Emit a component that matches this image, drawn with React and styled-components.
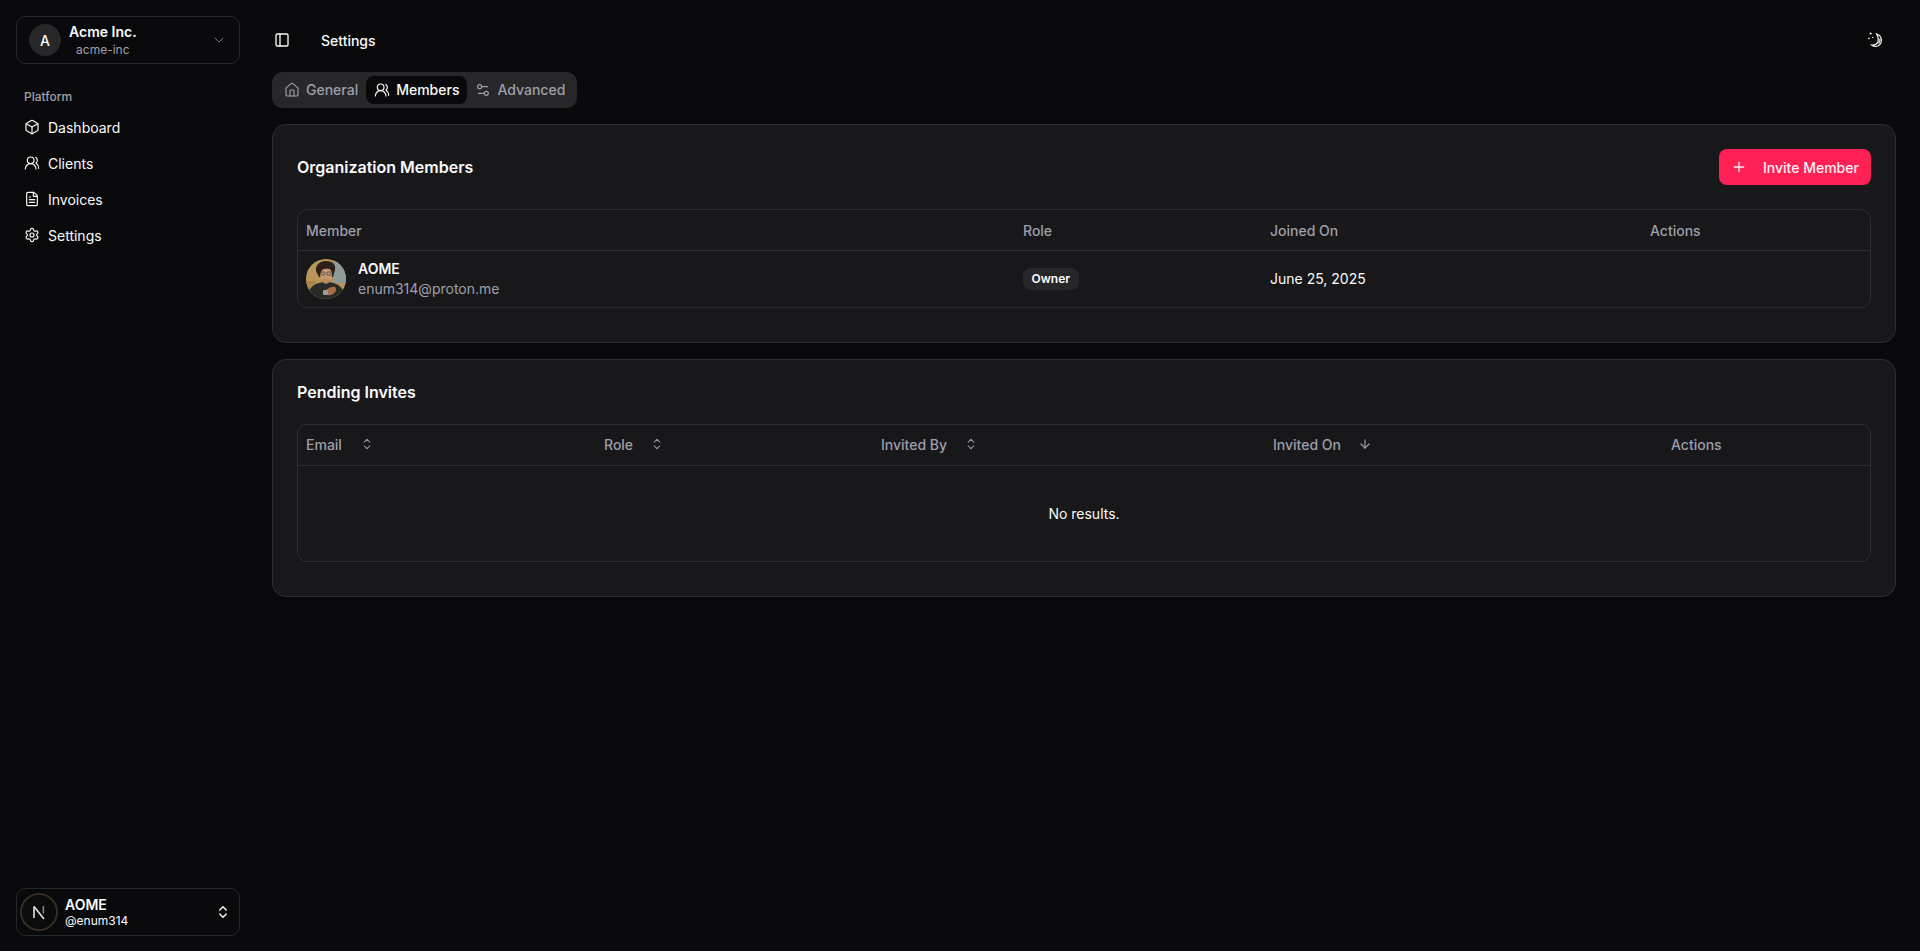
import React from 'react';
import styled, { createGlobalStyle } from 'styled-components';
import {
  Box,
  ChevronDown,
  ChevronsUpDown,
  ArrowDown,
  FileText,
  House,
  PanelLeft,
  Plus,
  Settings,
  Settings2,
  UsersRound,
} from 'lucide-react';

const GlobalStyle = createGlobalStyle`
  html, body { margin: 0; padding: 0; background: #09090b; }
  body {
    font-family: Inter, "Liberation Sans", sans-serif;
    color: #fafafa;
    font-size: 14px;
  }
  * { box-sizing: border-box; }
`;

const Shell = styled.div`
  display: flex;
  height: 951px;
  overflow: hidden;
`;

const Sidebar = styled.aside`
  width: 256px;
  flex: none;
  display: flex;
  flex-direction: column;
  justify-content: space-between;
  padding: 16px 16px 15px;
`;

const SwitchBox = styled.div`
  height: ${(p) => p.$h}px;
  display: flex;
  align-items: center;
  border: 1px solid #27272a;
  border-radius: 10px;
  padding: 0 ${(p) => p.$right}px 0 ${(p) => p.$left}px;
`;

const TeamAvatar = styled.div`
  width: 32px;
  height: 32px;
  border-radius: 50%;
  background: #27272a;
  display: flex;
  align-items: center;
  justify-content: center;
  font-size: 14px;
  font-weight: 500;
  margin-right: 8px;
`;

const TeamText = styled.div`
  display: flex;
  flex-direction: column;
  align-items: center;
`;

const TeamWrap = styled.div`
  margin-right: auto;
`;

const StrongLine = styled.div`
  font-size: 14px;
  line-height: 17px;
  font-weight: 600;
`;

const MutedLine = styled.div`
  font-size: 12px;
  line-height: 17px;
  padding-top: 1px;
  color: #9f9fa9;
`;

const NavGroup = styled.nav`
  display: flex;
  flex-direction: column;
  gap: 4px;
  margin-top: 25px;
`;

const GroupLabel = styled.div`
  font-size: 12px;
  font-weight: 500;
  line-height: 16px;
  color: #a1a1aa;
  padding-left: 8px;
  margin-bottom: 2px;
`;

const NavItem = styled.a`
  height: 32px;
  display: flex;
  align-items: center;
  gap: 8px;
  padding-left: 8px;
  font-size: 14px;
  color: #fafafa;
`;

const UserAvatar = styled.div`
  width: 38px;
  height: 38px;
  border-radius: 50%;
  background: #0b0b0b;
  border: 2px solid #332d24;
  margin-right: 7px;
  display: flex;
  align-items: center;
  justify-content: center;
`;

const UserHandle = styled.div`
  font-size: 12px;
  line-height: 16px;
  font-weight: 400;
`;

const Main = styled.main`
  flex: 1;
  min-width: 0;
  padding: 0 24px 0 16px;
`;

const TopBar = styled.header`
  height: 72px;
  padding-top: 8px;
  display: flex;
  align-items: center;
`;

const IconSlot = styled.div`
  display: flex;
  margin-left: 2px;
  margin-right: 31px;
`;

const PageTitle = styled.div`
  font-size: 14px;
  font-weight: 500;
  margin-right: auto;
`;

const ThemeIcon = styled.svg`
  width: 18px;
  height: 18px;
  margin-right: 12px;
`;

const TabList = styled.div`
  display: inline-flex;
  padding: 4px;
  background: #27272a;
  border-radius: 10px;
  height: 36px;
  margin-bottom: 16px;
`;

const Tab = styled.div`
  display: flex;
  align-items: center;
  gap: 6px;
  padding: 0 8px 1px;
  border-radius: 8px;
  font-size: 14px;
  font-weight: 500;
  color: ${(p) => (p.$active ? '#fafafa' : '#9f9fa9')};
  background: ${(p) => (p.$active ? '#09090b' : 'transparent')};
`;

const Card = styled.section`
  background: #18181b;
  border: 1px solid #2e2e32;
  border-radius: 14px;
  padding: 24px 24px 34px;
  margin-bottom: 16px;
`;

const CardHead = styled.div`
  display: flex;
  align-items: center;
  justify-content: space-between;
  margin-bottom: 24px;
`;

const CardTitle = styled.h2`
  margin: 0;
  font-size: 16px;
  line-height: 16px;
  font-weight: 600;
`;

const InviteButton = styled.button`
  height: 36px;
  width: 152px;
  display: flex;
  align-items: center;
  gap: 16px;
  padding: 0 12px;
  border: 0;
  border-radius: 8px;
  background: #ff2056;
  color: #fff1f2;
  font-family: inherit;
  font-size: 14px;
  font-weight: 500;
  white-space: nowrap;
`;

const TableWrap = styled.div`
  border: 1px solid #2e2e32;
  border-radius: 10px;
  overflow: hidden;
`;

const Table = styled.table`
  width: 100%;
  border-collapse: collapse;
  table-layout: fixed;
`;

const Th = styled.th`
  width: ${(p) => p.$w}px;
  height: 40px;
  padding: ${(p) => (p.$lift ? '0 8px 1px' : '1px 8px 0')};
  text-align: left;
  font-weight: 500;
  font-size: 14px;
  color: #9f9fa9;
  border-bottom: 1px solid #2e2e32;
`;

const SortLabel = styled.div`
  display: flex;
  align-items: center;
  gap: ${(p) => p.$gap}px;
`;

const Td = styled.td`
  padding: 8px;
  height: 57px;
  font-size: 14px;
`;

const EmptyCell = styled.td`
  height: 96px;
  text-align: center;
  font-size: 14px;
  font-weight: 400;
`;

const MemberCell = styled.div`
  display: flex;
  align-items: center;
  gap: 12px;
`;

const Portrait = styled.svg`
  width: 40px;
  height: 40px;
  border-radius: 50%;
  flex: none;
`;

const MemberName = styled.div`
  font-weight: 600;
  line-height: 20px;
`;

const MemberMail = styled.div`
  color: #9f9fa9;
  line-height: 20px;
`;

const Badge = styled.span`
  display: inline-block;
  height: 22px;
  line-height: 22px;
  padding: 0 8.5px;
  border-radius: 8px;
  background: #27272a;
  font-size: 12px;
  font-weight: 600;
`;

function MoonStars() {
  return (
    <ThemeIcon viewBox="0 0 18 18" fill="none" stroke="#fafafa">
      <path d="M10.5 3a6.4 6.4 0 0 1 1.6 11.8 6.2 6.2 0 0 1-6.2-.6c2.8 .2 5-1 6-3.4 .8-2.4 .2-5.2-1.4-7.8Z" strokeWidth="1.2" />
      <path d="M12.6 12.6c1.2-1.4 1.7-3.2 1.3-5" strokeWidth="1.2" />
      <path d="M4.6 1.4v2.2M3.5 2.5h2.2" strokeWidth="0.9" />
      <circle cx="3" cy="7.4" r="0.8" fill="#fafafa" stroke="none" />
      <circle cx="6.8" cy="6.4" r="0.7" fill="#fafafa" stroke="none" />
    </ThemeIcon>
  );
}

function NextMark() {
  return (
    <svg width="18" height="18" viewBox="0 0 18 18" fill="none">
      <path d="M4 15V3.5" stroke="#e4e4e4" strokeWidth="1.6" />
      <path d="M4 3.5 14 16" stroke="#e4e4e4" strokeWidth="1.6" />
      <path d="M13.4 3v7.5" stroke="#8a8a8a" strokeWidth="1.5" />
    </svg>
  );
}

// small painted portrait for the member row
function MemberPortrait() {
  return (
    <Portrait viewBox="0 0 40 40">
      <rect width="40" height="40" fill="#b8965a" />
      <rect x="28" y="0" width="12" height="24" fill="#8d9a98" />
      <rect x="0" y="22" width="10" height="18" fill="#a9864a" />
      <path d="M10 12c-1-6 4-10 10-10 6 0 10 3 9 9l-2 7H13Z" fill="#2b2119" />
      <ellipse cx="20" cy="15.5" rx="6" ry="7" fill="#c4996c" />
      <path d="M12 12c2-5 12-7 16-2-4 0-10-1-12 1l-2 4Z" fill="#2b2119" />
      <rect x="15" y="13" width="4" height="3" rx="1" fill="none" stroke="#3c3c3c" strokeWidth=".7" />
      <rect x="21" y="13" width="4" height="3" rx="1" fill="none" stroke="#3c3c3c" strokeWidth=".7" />
      <path d="M1 40c0-10 7-17 19-17 13 0 19 7 19 17Z" fill="#2a2a27" />
      <path d="M17 20h6l1 3-4 2-4-2Z" fill="#b98b64" />
      <path d="M18 33c3-3 7-6 11-5 2 2 1 5-2 7-3 2-6 1-9 0Z" fill="#a66f47" />
      <rect x="17" y="31" width="5" height="5" rx="1" fill="#9d9d9d" />
    </Portrait>
  );
}

const navItems = [
  { label: 'Dashboard', Icon: Box },
  { label: 'Clients', Icon: UsersRound },
  { label: 'Invoices', Icon: FileText },
  { label: 'Settings', Icon: Settings },
];

const tabs = [
  { label: 'General', Icon: House },
  { label: 'Members', Icon: UsersRound, active: true },
  { label: 'Advanced', Icon: Settings2 },
];

export default function App() {
  return (
    <>
      <GlobalStyle />
      <Shell>
        <Sidebar>
          <div>
            <SwitchBox $h={48} $left={12} $right={12}>
              <TeamAvatar>A</TeamAvatar>
              <TeamWrap>
                <TeamText>
                  <StrongLine>Acme Inc.</StrongLine>
                  <MutedLine>acme-inc</MutedLine>
                </TeamText>
              </TeamWrap>
              <ChevronDown size={16} color="#71717a" strokeWidth={1.5} />
            </SwitchBox>
            <NavGroup>
              <GroupLabel>Platform</GroupLabel>
              {navItems.map(({ label, Icon }) => (
                <NavItem key={label}>
                  <Icon size={16} strokeWidth={1.75} />
                  {label}
                </NavItem>
              ))}
            </NavGroup>
          </div>
          <SwitchBox $h={48} $left={3} $right={8}>
            <UserAvatar>
              <NextMark />
            </UserAvatar>
            <TeamWrap>
              <StrongLine>AOME</StrongLine>
              <UserHandle>@enum314</UserHandle>
            </TeamWrap>
            <ChevronsUpDown size={16} color="#fafafa" />
          </SwitchBox>
        </Sidebar>

        <Main>
          <TopBar>
            <IconSlot>
              <PanelLeft size={16} />
            </IconSlot>
            <PageTitle>Settings</PageTitle>
            <MoonStars />
          </TopBar>

          <TabList>
            {tabs.map(({ label, Icon, active }) => (
              <Tab key={label} $active={active}>
                <Icon size={16} strokeWidth={1.75} />
                {label}
              </Tab>
            ))}
          </TabList>

          <Card>
            <CardHead>
              <CardTitle>Organization Members</CardTitle>
              <InviteButton>
                <Plus size={16} />
                Invite Member
              </InviteButton>
            </CardHead>
            <TableWrap>
              <Table>
                <thead>
                  <tr>
                    <Th $w={717}>Member</Th>
                    <Th $w={247}>Role</Th>
                    <Th $w={380}>Joined On</Th>
                    <Th>Actions</Th>
                  </tr>
                </thead>
                <tbody>
                  <tr>
                    <Td>
                      <MemberCell>
                        <MemberPortrait />
                        <div>
                          <MemberName>AOME</MemberName>
                          <MemberMail>enum314@proton.me</MemberMail>
                        </div>
                      </MemberCell>
                    </Td>
                    <Td>
                      <Badge>Owner</Badge>
                    </Td>
                    <Td>June 25, 2025</Td>
                    <Td />
                  </tr>
                </tbody>
              </Table>
            </TableWrap>
          </Card>

          <Card>
            <CardHead>
              <CardTitle>Pending Invites</CardTitle>
            </CardHead>
            <TableWrap>
              <Table>
                <thead>
                  <tr>
                    <Th $w={298} $lift>
                      <SortLabel $gap={18}>
                        Email
                        <ChevronsUpDown size={14} strokeWidth={1.75} />
                      </SortLabel>
                    </Th>
                    <Th $w={277} $lift>
                      <SortLabel $gap={17}>
                        Role
                        <ChevronsUpDown size={14} strokeWidth={1.75} />
                      </SortLabel>
                    </Th>
                    <Th $w={392} $lift>
                      <SortLabel $gap={17}>
                        Invited By
                        <ChevronsUpDown size={14} strokeWidth={1.75} />
                      </SortLabel>
                    </Th>
                    <Th $w={398} $lift>
                      <SortLabel $gap={17}>
                        Invited On
                        <ArrowDown size={14} />
                      </SortLabel>
                    </Th>
                    <Th $lift>Actions</Th>
                  </tr>
                </thead>
                <tbody>
                  <tr>
                    <EmptyCell colSpan={5}>No results.</EmptyCell>
                  </tr>
                </tbody>
              </Table>
            </TableWrap>
          </Card>
        </Main>
      </Shell>
    </>
  );
}
